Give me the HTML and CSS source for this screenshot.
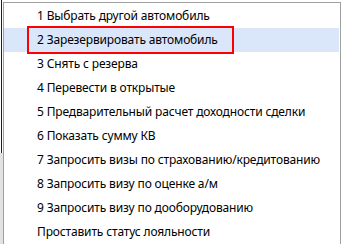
FILE: index.html
```html
<!DOCTYPE html>
<html lang="ru">
<head>
  <meta charset="UTF-8">
  <title>Меню автомобиля</title>
  <link rel="stylesheet" href="styles.css">
</head>
<body>
  <div class="page">
    <div class="edge">
      <div class="edge-line"></div>
      <div class="edge-rest"></div>
    </div>

    <ul class="menu">
      <li class="menu-item">1 Выбрать другой автомобиль</li>
      <li class="menu-item active marked">2 Зарезервировать автомобиль</li>
      <li class="menu-item">3 Снять с резерва</li>
      <li class="menu-item">4 Перевести в открытые</li>
      <li class="menu-item">5 Предварительный расчет доходности сделки</li>
      <li class="menu-item">6 Показать сумму КВ</li>
      <li class="menu-item">7 Запросить визы по страхованию/кредитованию</li>
      <li class="menu-item">8 Запросить визу по оценке а/м</li>
      <li class="menu-item">9 Запросить визу по дооборудованию</li>
      <li class="menu-item">Проставить статус лояльности</li>
    </ul>
  </div>
</body>
</html>
```

FILE: styles.css
```css
body {
  margin: 0;
  background: #fff;
  font-family: "Noto Sans", "Open Sans", sans-serif;
  font-size: 12px;
  letter-spacing: -0.15px;
  color: #000;
  overflow: hidden;
}

.page {
  display: flex;
  height: 244px;
}

.edge {
  width: 3px;
  display: flex;
  flex-direction: column;
}

.edge-line {
  height: 153px;
  width: 1px;
  margin-left: 1px;
  background: #1e1e1e;
}

.edge-rest {
  flex: 1;
  background: #e2e2e2;
}

.menu {
  flex: 1;
  list-style: none;
  margin: 2px 0 0 0;
  padding: 1px 0 0 0;
  border: 1px solid #a0a0a0;
  border-bottom: none;
  background: #fff;
}

.menu-item {
  position: relative;
  height: 24px;
  line-height: 24px;
  padding-left: 33px;
  margin-right: 1px;
  white-space: nowrap;
}

.menu-item.active {
  background: #dae6fa;
}

/* red frame drawn over the selected entry */
.menu-item.marked::after {
  content: "";
  position: absolute;
  left: 23px;
  top: -2px;
  width: 203px;
  height: 24px;
  border: 2px solid #f00;
}
```
